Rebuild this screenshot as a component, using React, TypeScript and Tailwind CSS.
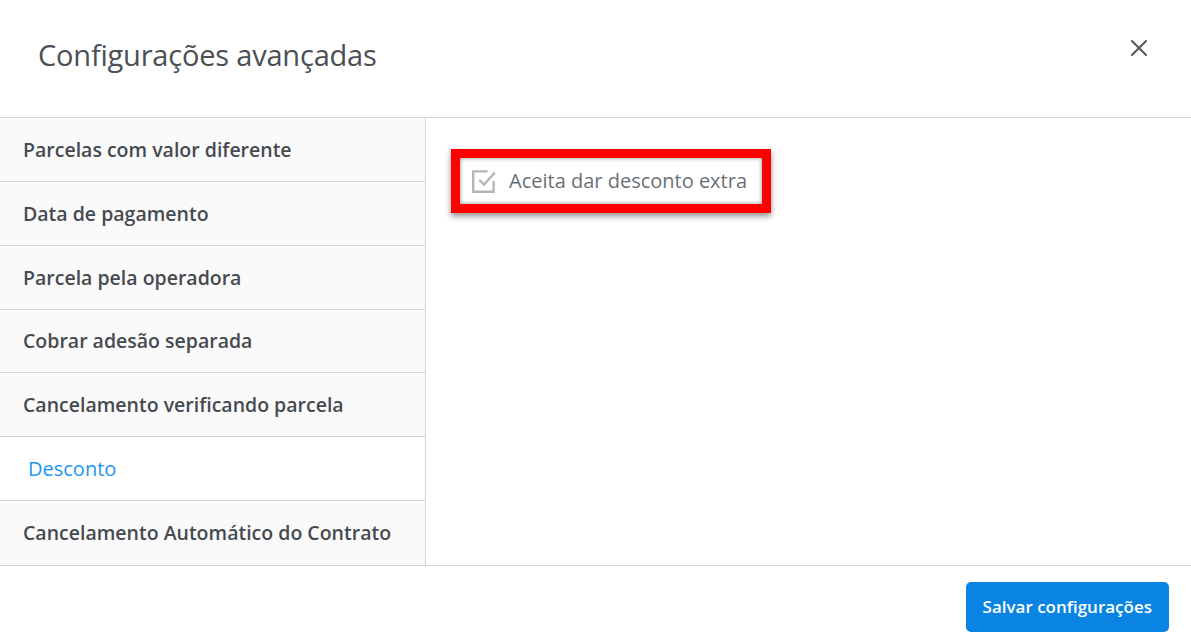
import { X } from "lucide-react";

const items = [
  "Parcelas com valor diferente",
  "Data de pagamento",
  "Parcela pela operadora",
  "Cobrar adesão separada",
  "Cancelamento verificando parcela",
  "Desconto",
  "Cancelamento Automático do Contrato",
];

const App = () => {
  return (
    <div className="w-[1191px] h-[642px] bg-white flex flex-col font-['Open_Sans',sans-serif] overflow-hidden">
      {/* Header */}
      <header className="h-[118px] flex items-start justify-between border-b border-[#d6d6d6] shrink-0">
        <h1 className="pl-[38px] pt-[35px] text-[29px] leading-[40px] text-[#4b4f56] tracking-[-0.2px]">
          Configurações avançadas
        </h1>
        <button className="mr-[38px] mt-[34px] text-[#55585e]">
          <X className="w-[28px] h-[28px]" strokeWidth={1.8} />
        </button>
      </header>

      {/* Body */}
      <main className="flex h-[448px] shrink-0 border-b border-[#d6d6d6]">
        <nav className="w-[426px] border-r border-[#d6d6d6] bg-[#fafafa] flex flex-col">
          {items.map((item, i) => {
            const active = item === "Desconto";
            return (
              <div
                key={item}
                className={
                  active
                    ? "h-[64px] flex items-center pl-[28px] bg-white text-[#2196f3] text-[20px] border-b border-[#d6d6d6]"
                    : i === items.length - 1
                    ? "h-[64px] flex items-center pl-[23px] text-[#464a50] text-[19.5px] font-semibold"
                    : "h-[64px] flex items-center pl-[23px] text-[#464a50] text-[19.5px] font-semibold border-b border-[#d6d6d6]"
                }
              >
                {item}
              </div>
            );
          })}
        </nav>

        <section className="flex-1 pl-[25px] pt-[31px]">
          <div className="inline-flex items-center h-[64px] pl-[12px] pr-[15px] border-[9px] border-[#ff0000] shadow-[0_3px_6px_rgba(0,0,0,0.45),inset_0_0_4px_rgba(0,0,0,0.45)]">
            <svg
              width="24"
              height="24"
              viewBox="2 2 20 20"
              fill="none"
              stroke="#b3b6bb"
              strokeWidth="2"
              className="mr-[13px]"
            >
              <path d="M20 12v9H3V4h12" />
              <path d="M8 11l4 4 9-10" />
            </svg>
            <span className="text-[20px] text-[#6b6f75]">Aceita dar desconto extra</span>
          </div>
        </section>
      </main>

      {/* Footer */}
      <footer className="flex-1 flex justify-end items-start pr-[22px] pt-[16px]">
        <button className="h-[50px] px-[17px] rounded-[5px] bg-[#0a84e3] text-white text-[17px] font-semibold">
          Salvar configurações
        </button>
      </footer>
    </div>
  );
};

export default App;
